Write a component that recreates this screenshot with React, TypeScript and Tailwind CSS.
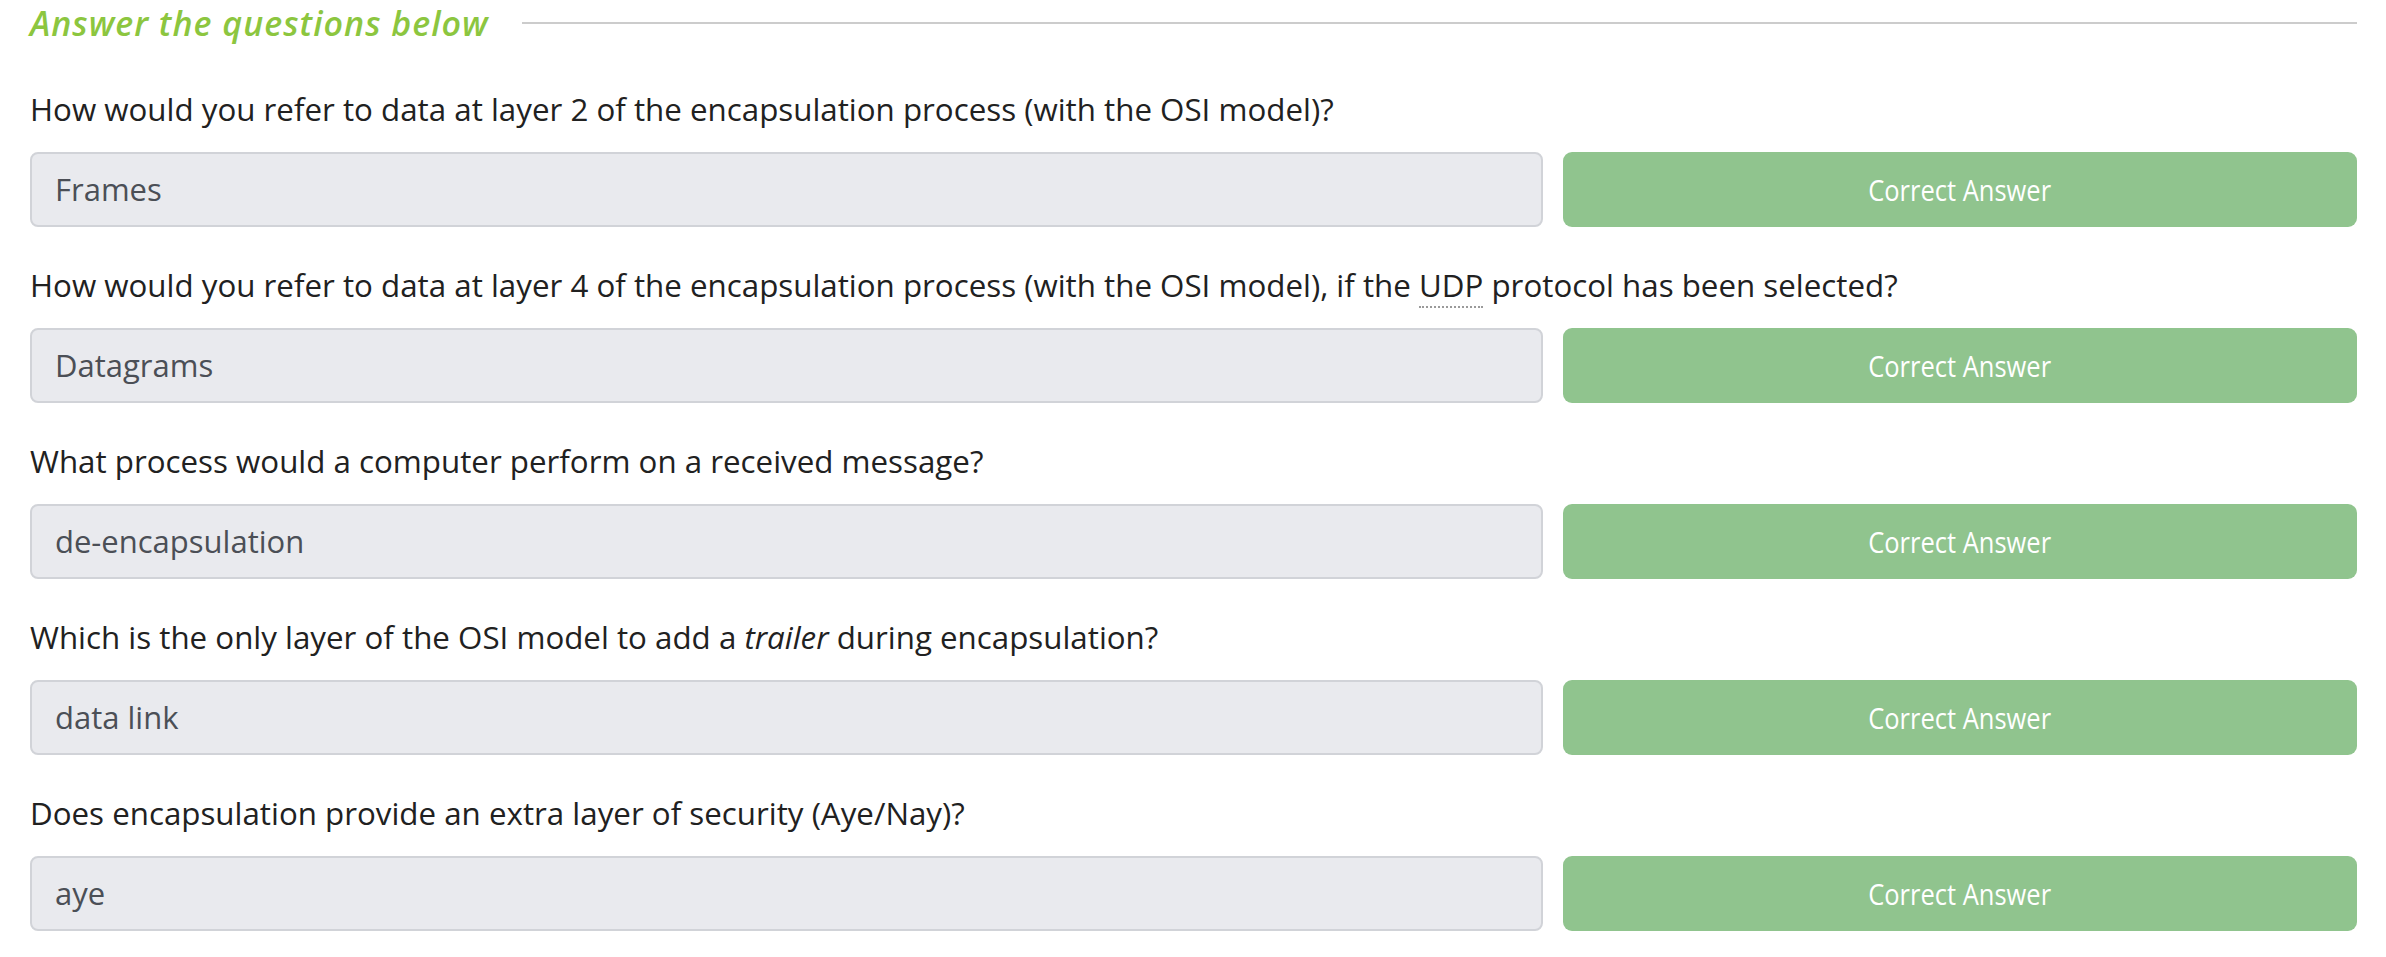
import React from 'react';

type Question = {
  text: React.ReactNode;
  answer: string;
};

const questions: Question[] = [
  {
    text: 'How would you refer to data at layer 2 of the encapsulation process (with the OSI model)?',
    answer: 'Frames',
  },
  {
    text: (
      <>
        How would you refer to data at layer 4 of the encapsulation process (with the OSI model), if the{' '}
        <abbr className="no-underline border-b-2 border-dotted border-[#9a9a9a]">UDP</abbr> protocol has been selected?
      </>
    ),
    answer: 'Datagrams',
  },
  {
    text: 'What process would a computer perform on a received message?',
    answer: 'de-encapsulation',
  },
  {
    text: (
      <>
        Which is the only layer of the OSI model to add a <em>trailer</em> during encapsulation?
      </>
    ),
    answer: 'data link',
  },
  {
    text: 'Does encapsulation provide an extra layer of security (Aye/Nay)?',
    answer: 'aye',
  },
];

const App: React.FC = () => {
  return (
    <div className="w-[2386px] h-[957px] bg-white overflow-hidden" style={{ fontFamily: '"Open Sans", Lato, sans-serif' }}>
      <div className="flex flex-col pl-[30px] pr-[29px] pt-[3px]">
        {/* Heading with rule */}
        <div className="flex items-center gap-[33px] h-[40px]">
          <h3 className="text-[34px] leading-[40px] italic font-semibold tracking-[1px] text-[#8cc63f] whitespace-nowrap">
            Answer the questions below
          </h3>
          <div className="flex-1 h-[2px] bg-[#cccccc]" />
        </div>

        <div className="flex flex-col mt-[46px]">
          {questions.map((q, i) => (
            <div key={i} className="flex flex-col mb-[38px]">
              <p className="text-[31.3px] leading-[40px] text-[#212121]">{q.text}</p>
              <div className="flex gap-[20px] mt-[23px] h-[75px]">
                <div className="w-[1513px] flex items-center px-[23px] bg-[#e9eaee] border-2 border-[#d1d3d8] rounded-[8px] text-[31px] text-[#4b4f56]">
                  {q.answer}
                </div>
                <button className="flex-1 flex items-center justify-center bg-[#90c48e] rounded-[9px] text-white">
                  <span className="inline-block text-[30px] scale-x-[0.85]">Correct Answer</span>
                </button>
              </div>
            </div>
          ))}
        </div>
      </div>
    </div>
  );
};

export default App;
